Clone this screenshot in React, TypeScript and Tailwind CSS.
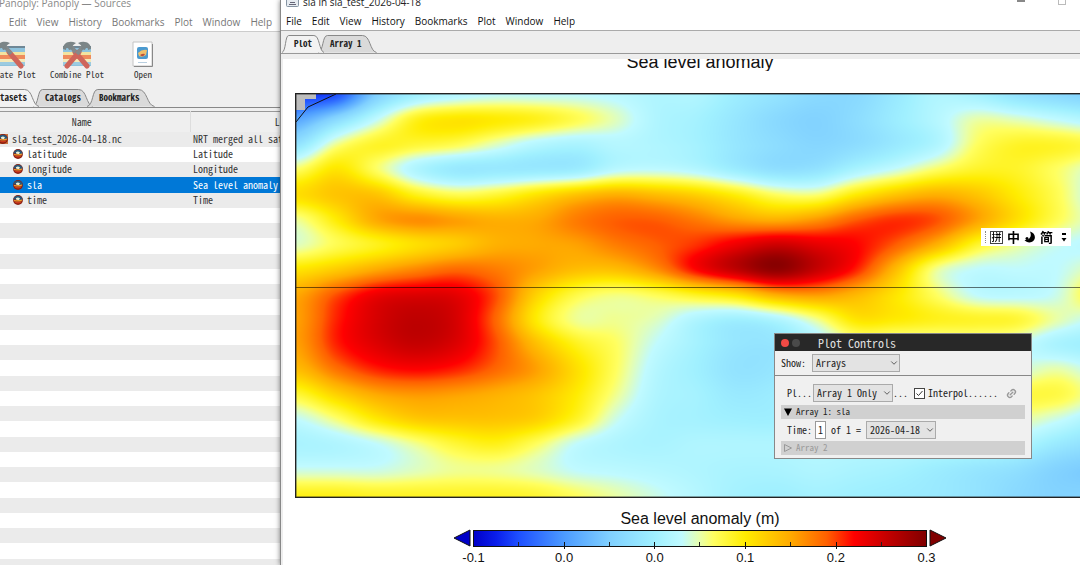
import { useEffect, useRef } from "react";
import type { ReactNode } from "react";
import { ChevronDown, Link2 } from "lucide-react";

const MONO = "font-['Noto_Sans_Mono_CJK_SC','Liberation_Mono',monospace]";

/* Sea level anomaly as a percentage of the colour scale, one row per 25 px, one column per 40 px. */
const FIELD: number[][] = [
  [8, 10, 30, 40, 44, 46, 46, 46, 45, 43, 43, 39, 36, 33, 33, 38, 43, 41, 36, 33, 31],
  [22, 33, 46, 58, 61, 60, 58, 54, 49, 43, 41, 37, 33, 31, 34, 39, 44, 50, 49, 46, 43],
  [36, 51, 57, 56, 54, 49, 44, 42, 44, 43, 41, 37, 34, 32, 34, 38, 43, 53, 57, 57, 55],
  [53, 61, 53, 43, 38, 38, 38, 39, 45, 46, 44, 39, 35, 36, 42, 47, 53, 57, 57, 53, 48],
  [62, 66, 66, 58, 54, 56, 61, 66, 69, 67, 64, 59, 53, 52, 60, 66, 69, 66, 60, 54, 46],
  [51, 60, 70, 73, 71, 69, 70, 75, 78, 78, 75, 71, 69, 72, 78, 81, 79, 71, 62, 54, 48],
  [49, 54, 58, 62, 65, 69, 70, 71, 75, 78, 81, 86, 90, 87, 84, 78, 69, 57, 51, 47, 45],
  [61, 65, 70, 74, 77, 75, 71, 67, 67, 73, 84, 92, 98, 91, 82, 67, 51, 46, 46, 46, 50],
  [70, 79, 86, 88, 87, 79, 64, 55, 52, 54, 58, 62, 70, 72, 68, 61, 53, 46, 45, 47, 56],
  [71, 82, 89, 92, 89, 77, 60, 51, 51, 49, 43, 40, 43, 51, 61, 60, 58, 57, 56, 50, 46],
  [71, 82, 88, 91, 88, 79, 67, 58, 53, 46, 41, 37, 37, 43, 49, 48, 48, 48, 47, 42, 40],
  [67, 76, 82, 84, 82, 77, 71, 62, 53, 44, 40, 36, 37, 42, 44, 44, 44, 44, 47, 50, 46],
  [56, 64, 70, 72, 71, 69, 66, 60, 51, 43, 41, 38, 39, 42, 43, 43, 44, 46, 54, 55, 50],
  [46, 52, 60, 65, 66, 66, 64, 57, 47, 42, 41, 40, 40, 43, 44, 44, 44, 45, 50, 47, 42],
  [42, 43, 46, 51, 56, 58, 53, 46, 43, 42, 43, 43, 43, 44, 44, 44, 44, 44, 43, 38, 35],
  [47, 47, 47, 49, 51, 51, 49, 46, 45, 44, 43, 42, 42, 43, 42, 41, 39, 37, 35, 31, 29],
  [58, 58, 57, 57, 57, 57, 56, 53, 50, 47, 44, 41, 40, 41, 40, 39, 38, 36, 33, 31, 31],
];

type Stop = [number, number, number, number];
const SCALE: Stop[] = [
  [0, 0, 0, 200],
  [5, 10, 30, 235],
  [10, 30, 80, 255],
  [20, 76, 155, 255],
  [30, 128, 208, 255],
  [40, 160, 240, 255],
  [46, 192, 250, 255],
  [50, 232, 255, 170],
  [53, 255, 255, 96],
  [60, 255, 236, 0],
  [70, 255, 170, 0],
  [78, 255, 96, 0],
  [84, 255, 0, 0],
  [92, 190, 0, 0],
  [100, 128, 0, 0],
];

function colourAt(v: number): [number, number, number] {
  const t = Math.max(0, Math.min(100, v));
  let i = 1;
  while (i < SCALE.length - 1 && SCALE[i][0] < t) i++;
  const a = SCALE[i - 1];
  const b = SCALE[i];
  const f = (t - a[0]) / (b[0] - a[0]);
  return [a[1] + (b[1] - a[1]) * f, a[2] + (b[2] - a[2]) * f, a[3] + (b[3] - a[3]) * f];
}

function cubic(a: number, b: number, c: number, d: number, t: number) {
  return b + 0.5 * t * (c - a + t * (2 * a - 5 * b + 4 * c - d + t * (3 * (b - c) + d - a)));
}

function cell(r: number, c: number) {
  const row = FIELD[Math.max(0, Math.min(FIELD.length - 1, r))];
  return row[Math.max(0, Math.min(row.length - 1, c))];
}

function fieldAt(x: number, y: number) {
  const gx = x / 40;
  const gy = y / 25;
  const c = Math.floor(gx);
  const r = Math.floor(gy);
  const rows = [-1, 0, 1, 2].map((k) =>
    cubic(cell(r + k, c - 1), cell(r + k, c), cell(r + k, c + 1), cell(r + k, c + 2), gx - c)
  );
  return cubic(rows[0], rows[1], rows[2], rows[3], gy - r);
}

function HeatMap() {
  const ref = useRef<HTMLCanvasElement>(null);
  useEffect(() => {
    const canvas = ref.current;
    const ctx = canvas?.getContext("2d");
    if (!canvas || !ctx) return;
    const { width, height } = canvas;
    const img = ctx.createImageData(width, height);
    for (let y = 0; y < height; y++) {
      for (let x = 0; x < width; x++) {
        const [r, g, b] = colourAt(fieldAt(x, y));
        const o = (y * width + x) * 4;
        img.data[o] = r;
        img.data[o + 1] = g;
        img.data[o + 2] = b;
        img.data[o + 3] = 255;
      }
    }
    ctx.putImageData(img, 0, 0);
  }, []);
  return (
    <div className="relative border border-[#222]">
      <canvas ref={ref} width={808} height={403} className="block w-full" aria-label="Sea level anomaly map" />
      <svg className="absolute inset-0 h-full w-full" viewBox="0 0 808 403" preserveAspectRatio="none" aria-hidden="true">
        <path d="M0 0h20v5h-11v11H0z" fill="#bdbdbd" />
        <path d="M0 28L12 13L40 0" fill="none" stroke="#111" strokeWidth="1" />
        <path d="M0 193.5H808" stroke="#000" strokeOpacity="0.55" strokeWidth="1" />
        <rect width="808" height="403" fill="none" stroke="#222" strokeOpacity="0.8" />
      </svg>
    </div>
  );
}

function ColourBar() {
  return (
    <div className="flex flex-col items-center">
      <div className="font-['Liberation_Sans',sans-serif] text-[16px] leading-5 text-[#111]">Sea level anomaly (m)</div>
      <svg width="496" height="21" viewBox="0 0 496 21" aria-hidden="true">
        <defs>
          <linearGradient id="scale">
            {SCALE.map(([o, r, g, b]) => (
              <stop key={o} offset={o / 100} stopColor={`rgb(${r},${g},${b})`} />
            ))}
          </linearGradient>
        </defs>
        <path d="M18 1V17L2 9z" fill="#0000c8" stroke="#111" />
        <path d="M478 1V17L494 9z" fill="#800000" stroke="#111" />
        <rect x="21.5" y="1.5" width="453" height="16" fill="url(#scale)" stroke="#111" />
        {[66, 157, 247, 338, 429].map((x) => (
          <path key={x} d={`M${x + 0.5} 13V17`} stroke="#222" />
        ))}
        {[112, 202, 293, 384].map((x) => (
          <path key={x} d={`M${x + 0.5} 13V20`} stroke="#111" />
        ))}
      </svg>
      <div className="flex w-[485px] justify-between font-['Liberation_Sans',sans-serif] text-[13px] leading-4 text-[#111]">
        {["-0.1", "0.0", "0.0", "0.1", "0.2", "0.3"].map((t, i) => (
          <span key={i} className="w-8 text-center">
            {t}
          </span>
        ))}
      </div>
    </div>
  );
}

function Tab({ children, active, wide }: { children: ReactNode; active?: boolean; wide?: boolean }) {
  return (
    <button
      role="tab"
      aria-selected={!!active}
      className={`relative -mr-[6px] h-[18px] text-[9px] font-bold text-[#222] ${wide ? "pr-[15px] pl-3" : "px-3"} ${active ? "z-10" : ""}`}
    >
      <svg className="absolute inset-0 h-full w-full" viewBox="0 0 100 18" preserveAspectRatio="none" aria-hidden="true">
        <path
          d="M0 17.5C10 16 7 0.5 16 0.5H76C90 0.5 88 16 100 17.5"
          fill={active ? "#f2f2f2" : "#dadada"}
          stroke="#888"
          vectorEffect="non-scaling-stroke"
        />
      </svg>
      <span className="relative">{children}</span>
    </button>
  );
}

function MenuBar({ strong }: { strong?: boolean }) {
  return (
    <nav
      className={`flex h-[22px] shrink-0 items-center gap-[10px] border-b pt-1 font-['Open_Sans','Noto_Sans',sans-serif] text-[10px] ${
        strong ? "border-[#aaa] pl-[5px] text-[#111]" : "border-[#ccc] pl-[9px] text-[#777]"
      }`}
    >
      {["File", "Edit", "View", "History", "Bookmarks", "Plot", "Window", "Help"].map((m) => (
        <button key={m}>{m}</button>
      ))}
    </nav>
  );
}

function Stripes() {
  return (
    <>
      <rect x="1" y="6" width="28" height="19" fill="#8fc3dd" />
      <rect x="1" y="5" width="28" height="2" fill="#6f8796" />
      <rect x="1" y="11" width="28" height="3" fill="#f3e3a0" />
      <rect x="1" y="14" width="28" height="4" fill="#ef8b5c" />
      <rect x="1" y="18" width="28" height="3" fill="#f5e9b8" />
      <rect x="1" y="21" width="28" height="3" fill="#9ccbe0" />
    </>
  );
}

function Hammer({ flip }: { flip?: boolean }) {
  return (
    <g transform={flip ? "translate(30 0) scale(-1 1)" : undefined}>
      <path d="M13 11L25 25" stroke="#cf655b" strokeWidth="5" strokeLinecap="round" />
      <path d="M8 4L15 13" stroke="#838a8c" strokeWidth="4" />
      <path d="M1 8C1 2 7 -1 14 2L10 5L11 8L7 9C6 6 4 6 4 9z" fill="#7b8587" />
    </g>
  );
}

function ToolButton({ label, kind }: { label: string; kind: "create" | "combine" | "open" }) {
  return (
    <button className="flex w-[66px] flex-col items-center text-[9px] leading-[11px] text-[#333]">
      <svg width="30" height="28" viewBox="0 0 30 28" aria-hidden="true">
        {kind === "open" ? (
          <>
            <path d="M5 1H24V25H5z" fill="#fff" stroke="#c4c4c4" />
            <path d="M24.5 3V25.500H6" fill="none" stroke="#888" />
            <rect x="9" y="6" width="11" height="12" rx="2" fill="#4b9ad0" />
            <path d="M10 12Q14 8 19 9L18 14Q14 17 11 15z" fill="#f1c06a" />
            <path d="M12 14Q15 12 17 13Q15 17 12 14z" fill="#b9503c" />
            <path d="M10 21.500H19" stroke="#b9cfe0" />
          </>
        ) : (
          <>
            <Stripes />
            <Hammer />
            {kind === "combine" && <Hammer flip />}
          </>
        )}
      </svg>
      {label}
    </button>
  );
}

function Globe({ file }: { file?: boolean }) {
  return (
    <svg width="10" height="10" viewBox="0 0 10 10" aria-hidden="true" className={`shrink-0 ${file ? "bg-[#c9733f]" : ""}`}>
      <circle cx="5" cy="5" r="4.900" fill="#8a1f12" />
      <path d="M0.300 4.500A4.800 4.800 0 0 1 9.700 4.500Q7 5.500 5 5Q2 4 0.300 4.500z" fill="#2c5878" />
      <path d="M3 3.200Q5 1.500 7 3.500L5.500 5.500Q4 4.500 3 4.500z" fill="#e8f0d8" />
      <path d="M0.800 5Q5 5.500 9.200 4.500L8.500 6.200Q5 7 1.200 6.200z" fill="#f0a030" />
      <path d="M1.500 6.500Q5 7.500 8.500 6.500L7.500 8Q5 8.800 2.500 8z" fill="#cc3a1c" />
    </svg>
  );
}

const ROWS: { name: string; long: string; level: number; selected?: boolean }[] = [
  { name: "sla_test_2026-04-18.nc", long: "NRT merged all satellites", level: 0 },
  { name: "latitude", long: "Latitude", level: 1 },
  { name: "longitude", long: "Longitude", level: 1 },
  { name: "sla", long: "Sea level anomaly", level: 1, selected: true },
  { name: "time", long: "Time", level: 1 },
];

function SourcesWindow() {
  return (
    <section className="w-[280px] shrink-0 overflow-hidden bg-[#efefef]">
      <div className={`-ml-[26px] flex h-full w-[430px] flex-col ${MONO}`}>
        <div className="flex h-[10px] shrink-0 items-end overflow-hidden bg-white pl-[25px] font-['Open_Sans','Noto_Sans',sans-serif] text-[10px] leading-[14px] text-[#888]">
          Panoply: Panoply — Sources
        </div>
        <div className="bg-white">
          <MenuBar />
        </div>
        <div className="flex h-[56px] shrink-0 items-start pt-[9px] pl-[4px]">
          <ToolButton label="Create Plot" kind="create" />
          <ToolButton label="Combine Plot" kind="combine" />
          <ToolButton label="Open" kind="open" />
        </div>
        <div role="tablist" className="flex h-[23px] shrink-0 items-end pb-[3px]">
          <div className="flex w-full items-end border-b border-[#888] pl-[5px]">
            <Tab active>Datasets</Tab>
            <Tab>Catalogs</Tab>
            <Tab wide>Bookmarks</Tab>
          </div>
        </div>
        <table className="w-full table-fixed border-collapse border-t border-[#999] bg-white text-[10px] leading-[14px] text-[#333]">
          <colgroup>
            <col className="w-[216px]" />
            <col className="w-[214px]" />
          </colgroup>
          <thead>
            <tr className="h-5 bg-[#efefef]">
              <th className="border-r border-[#ddd] p-0 font-normal">Name</th>
              <th className="p-0 font-normal">Long Name</th>
            </tr>
          </thead>
          <tbody>
            {Array.from({ length: 29 }, (_, i) => {
              const row = ROWS[i];
              const tone = row?.selected ? "bg-[#0078d7] text-white" : i % 2 ? "bg-white" : "bg-[#ebebeb]";
              return (
                <tr key={i} className={`${i % 4 === 3 ? "h-4" : "h-[15px]"} ${tone}`}>
                  <td className="p-0">
                    {row && (
                      <div className={`flex h-[15px] items-center gap-1 ${row.level ? "pl-[39px]" : "pl-[24px]"}`}>
                        <Globe file={!row.level} />
                        {row.name}
                      </div>
                    )}
                  </td>
                  <td className="p-0 pl-[3px] whitespace-nowrap">{row?.long}</td>
                </tr>
              );
            })}
          </tbody>
        </table>
      </div>
    </section>
  );
}

function Pick({ label, value, className }: { label: string; value: string; className: string }) {
  return (
    <span className={`relative flex h-[18px] shrink-0 ${className}`}>
      <select
        aria-label={label}
        defaultValue={value}
        className="w-full appearance-none border border-[#aaa] bg-[#e3e3e3] pl-[3px] text-[10px] leading-4 text-[#222]"
      >
        <option>{value}</option>
      </select>
      <ChevronDown className="pointer-events-none absolute top-1 right-[1px] text-[#444]" size={10} strokeWidth={2} aria-hidden="true" />
    </span>
  );
}

function PlotControls() {
  return (
    <div
      role="dialog"
      aria-label="Plot Controls"
      className={`absolute top-[333px] right-[48px] w-[258px] border border-[#888] bg-[#f0f0f0] text-[10px] leading-4 text-[#222] ${MONO}`}
    >
      <header className="flex h-[17px] items-center bg-[#282828] pl-[6px] text-[12px] leading-[14px] text-[#ddd]">
        <span className="mr-[3px] h-2 w-2 rounded-full bg-[#f04a45]" />
        <span className="mr-[18px] h-2 w-2 rounded-full bg-[#4a4a4a]" />
        Plot Controls
      </header>
      <div className="flex h-[25px] items-center border-b border-[#888] pl-[6px]">
        <span className="w-[31px]">Show:</span>
        <Pick label="Show" value="Arrays" className="w-[88px]" />
      </div>
      <div className="px-[6px] pt-2">
        <div className="flex h-[18px] items-center pl-[6px]">
          <span className="w-[26px]">Pl...</span>
          <Pick label="Plot" value="Array 1 Only" className="w-20" />
          <span className="w-[21px]">...</span>
          <input
            id="interpolate"
            type="checkbox"
            defaultChecked
            className="mr-[3px] h-[11px] w-[11px] appearance-none border border-[#444] bg-white bg-[url('data:image/svg+xml,%3Csvg%20xmlns=%22http://www.w3.org/2000/svg%22%20viewBox=%220%200%209%209%22%3E%3Cpath%20d=%22M1.5%204.500L3.500%206.500L7.500%202%22%20fill=%22none%22%20stroke=%22%23333%22/%3E%3C/svg%3E')]"
          />
          <label htmlFor="interpolate">Interpol......</label>
          <Link2 className="ml-2 -rotate-45 text-[#999]" size={11} strokeWidth={3} aria-hidden="true" />
        </div>
        <div className="mt-[3px] flex h-[14px] items-center gap-1 bg-[#d0d0d0] pl-[3px] text-[9px]">
          <svg width="8" height="8" viewBox="0 0 8 8" aria-hidden="true">
            <path d="M0 0.500H8L4 8z" fill="#000" />
          </svg>
          Array 1: sla
        </div>
        <div className="flex h-[21px] items-center pl-[6px]">
          <label htmlFor="time" className="w-[28px]">
            Time:
          </label>
          <input id="time" defaultValue="1" className="mr-[5px] h-[18px] w-[11px] border border-[#999] bg-white pl-[2px] text-[10px]" />
          <span className="w-[35px]">of 1 =</span>
          <Pick label="Date" value="2026-04-18" className="w-[70px]" />
        </div>
        <div className="mt-px mb-[3px] flex h-[14px] items-center gap-1 bg-[#d0d0d0] pl-[3px] text-[9px] text-[#999]">
          <svg width="8" height="8" viewBox="0 0 8 8" aria-hidden="true">
            <path d="M0.500 0.500V7.500L7.500 4z" fill="none" stroke="#999" />
          </svg>
          Array 2
        </div>
      </div>
    </div>
  );
}

function InputBar() {
  return (
    <div className="absolute top-[228px] right-[9px] flex h-[18px] w-[90px] items-center gap-1 bg-white pl-1 font-['Noto_Sans_CJK_SC',sans-serif] text-[13px] leading-[18px] font-bold text-black">
      <span className="h-3 border-l border-dotted border-[#888]" />
      <span className="flex h-[13px] w-[13px] items-center justify-center border border-[#444] text-[10px] leading-3 font-medium">拼</span>
      <span>中</span>
      <svg width="12" height="12" viewBox="0 0 12 12" aria-hidden="true">
        <path d="M6 0.500C12 2 12.500 9 7.500 11C5 12 2 11 0.500 9C4.500 9.500 8.500 6 6 0.500z" fill="#000" />
        <circle cx="3" cy="7.500" r="1.500" fill="#000" />
      </svg>
      <span>简</span>
      <svg className="ml-1" width="6" height="10" viewBox="0 0 6 10" aria-hidden="true">
        <path d="M1 1H5V3H1zM0.500 6H5.500L3 9.500z" fill="#000" />
      </svg>
    </div>
  );
}

function PlotWindow() {
  return (
    <section className="relative flex min-w-0 flex-1 flex-col overflow-hidden border-l border-[#888] bg-white shadow-[0_0_5px_rgba(0,0,0,0.5)]">
      <div className="flex h-[9px] shrink-0 items-end gap-1 overflow-hidden pl-[5px] font-['Open_Sans','Noto_Sans',sans-serif] text-[10px] leading-[14px] text-[#222]">
        <svg className="mb-[2px]" width="13" height="13" viewBox="0 0 13 13" aria-hidden="true">
          <rect x="0.500" y="0.500" width="12" height="12" rx="1" fill="#e6ebf0" stroke="#8795a3" />
          <path d="M3 10.500H10M4 8.500H9M6 2Q8 4 6 6" fill="none" stroke="#667" />
        </svg>
        <span>sla in sla_test_2026-04-18</span>
        <span className="mr-[29px] mb-[7px] ml-auto h-[2px] w-2 bg-[#888]" />
        <span className="mr-[14px] mb-1 h-2 w-2 border border-[#bbb]" />
      </div>
      <MenuBar strong />
      <div className={`shrink-0 bg-[#eee] pt-[4px] pb-[5px] ${MONO}`}>
        <div role="tablist" className="flex border-b border-[#999] pl-[1px]">
          <Tab active>Plot</Tab>
          <Tab wide>Array 1</Tab>
        </div>
      </div>
      <div className="flex min-h-0 flex-1 flex-col overflow-hidden border-l-2 border-[#eee] pl-3">
        <div className="w-[810px]">
          <h1 className="flex h-3 items-end justify-center overflow-hidden font-['Liberation_Sans',sans-serif] text-[18px] leading-[18px] text-[#111]">
            Sea level anomaly
          </h1>
          <div className="pt-[22px] pb-[11px]">
            <HeatMap />
          </div>
          <ColourBar />
        </div>
      </div>
      <InputBar />
      <PlotControls />
    </section>
  );
}

export default function App() {
  return (
    <main className="flex h-screen overflow-hidden bg-white">
      <SourcesWindow />
      <PlotWindow />
    </main>
  );
}
